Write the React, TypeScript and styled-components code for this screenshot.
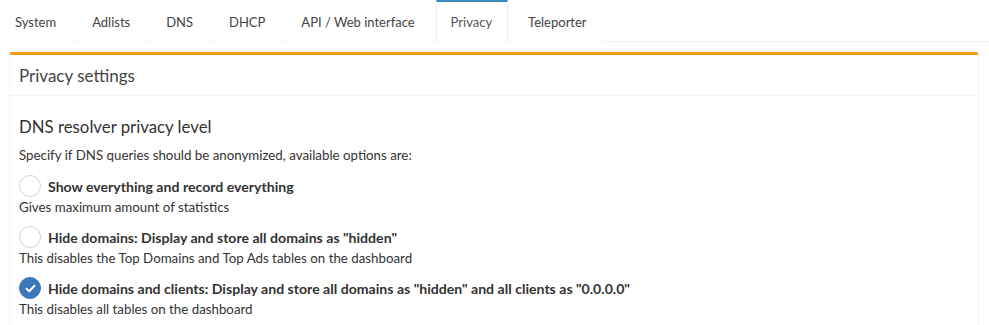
import React from "react";
import styled, { createGlobalStyle } from "styled-components";

const Global = createGlobalStyle`
  html, body { margin: 0; padding: 0; background: #ffffff; }
  body {
    font-family: "Source Sans Pro", Lato, "Liberation Sans", sans-serif;
    font-size: 13.3px;
    color: #333;
  }
  * { box-sizing: border-box; }
`;

const Page = styled.div`
  width: 989px;
  height: 325px;
  overflow: hidden;
  background: #fff;
`;

const TabBar = styled.ul`
  display: flex;
  margin: 0;
  padding: 0;
  list-style: none;
  height: 42px;
  border-bottom: 1px solid #f0f0f0;
`;

const Tab = styled.li<{ $active?: boolean }>`
  display: flex;
  align-items: center;
  height: 42px;
  padding: 0 15px 0 14px;
  margin-right: 5px;
  color: ${(p) => (p.$active ? "#555" : "#444")};
  font-size: 13px;
  background: #fff;
  border-top: 2px solid ${(p) => (p.$active ? "#3c8dbc" : "transparent")};
  border-left: 1px solid ${(p) => (p.$active ? "#f0f0f0" : "transparent")};
  border-right: 1px solid ${(p) => (p.$active ? "#f0f0f0" : "transparent")};
  margin-bottom: -1px;
`;

const Content = styled.div`
  padding: 10px 10px 0 9px;
`;

const Box = styled.section`
  background: #fff;
  border-top: 3px solid #f39c12;
  border-radius: 3px 3px 0 0;
  border-left: 1px solid #f4f4f4;
  border-right: 1px solid #f4f4f4;
`;

const BoxHeader = styled.div`
  height: 41px;
  display: flex;
  align-items: center;
  padding: 0 10px 0 9px;
  border-bottom: 1px solid #f4f4f4;
  font-size: 17px;
  color: #444;
`;

const BoxBody = styled.div`
  padding: 20px 10px 10px 9px;
`;

const SectionTitle = styled.h4`
  margin: 0 0 8px 0;
  font-size: 16.8px;
  font-weight: 400;
  color: #333;
  line-height: 21px;
`;

const Intro = styled.p`
  margin: 0 0 9px 0;
  line-height: 20px;
`;

const Option = styled.div`
  display: flex;
  flex-direction: column;
  margin-bottom: 8px;
`;

const OptionRow = styled.label`
  display: flex;
  align-items: center;
  gap: 6px;
  height: 24px;
  font-weight: 700;
  font-size: 14.1px;
`;

const Radio = styled.span<{ $checked?: boolean }>`
  width: 22px;
  height: 22px;
  border-radius: 50%;
  display: inline-flex;
  align-items: center;
  justify-content: center;
  border: 1px solid ${(p) => (p.$checked ? "#3a77b8" : "#d6d2cb")};
  background: ${(p) => (p.$checked ? "#3a77b8" : "#fff")};
  flex: none;
  margin-right: 1px;
`;

const Desc = styled.div`
  line-height: 20px;
  margin-top: -1px;
`;

const Check = () => (
  <svg width="13" height="13" viewBox="0 0 13 13" fill="none">
    <path d="M2.6 6.8 L5.3 9.3 L10.4 3.8" stroke="#fff" strokeWidth="2" strokeLinecap="round" strokeLinejoin="round" />
  </svg>
);

const tabs = ["System", "Adlists", "DNS", "DHCP", "API / Web interface", "Privacy", "Teleporter"];

const options = [
  {
    label: "Show everything and record everything",
    desc: "Gives maximum amount of statistics",
    checked: false,
  },
  {
    label: 'Hide domains: Display and store all domains as "hidden"',
    desc: "This disables the Top Domains and Top Ads tables on the dashboard",
    checked: false,
  },
  {
    label: 'Hide domains and clients: Display and store all domains as "hidden" and all clients as "0.0.0.0"',
    desc: "This disables all tables on the dashboard",
    checked: true,
  },
];

export default function App() {
  return (
    <Page>
      <Global />
      <TabBar>
        {tabs.map((t) => (
          <Tab key={t} $active={t === "Privacy"}>
            {t}
          </Tab>
        ))}
      </TabBar>
      <Content>
        <Box>
          <BoxHeader>Privacy settings</BoxHeader>
          <BoxBody>
            <SectionTitle>DNS resolver privacy level</SectionTitle>
            <Intro>Specify if DNS queries should be anonymized, available options are:</Intro>
            {options.map((o) => (
              <Option key={o.label}>
                <OptionRow>
                  <Radio $checked={o.checked}>{o.checked && <Check />}</Radio>
                  {o.label}
                </OptionRow>
                <Desc>{o.desc}</Desc>
              </Option>
            ))}
          </BoxBody>
        </Box>
      </Content>
    </Page>
  );
}
